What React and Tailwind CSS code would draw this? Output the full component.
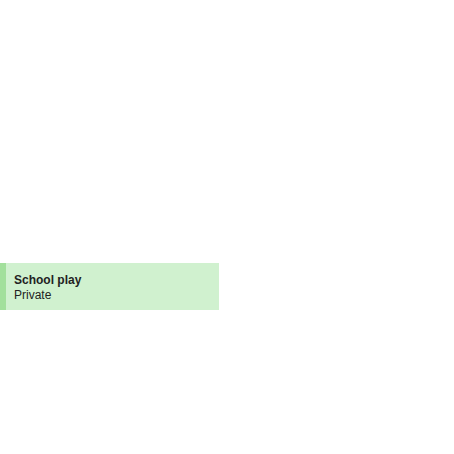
export default function App() {
  return (
    <div className="w-[454px] h-[454px] bg-white font-['Liberation_Sans',Arial,sans-serif]">
      <div className="pt-[263px]">
        <div className="w-[219px] h-[47px] bg-[#d0f1cf] border-l-[6px] border-[#a2e09c] pl-2 pt-[10px] text-[12px] leading-[15px] text-[#222]">
          <div className="font-bold">School play</div>
          <div>Private</div>
        </div>
      </div>
    </div>
  );
}
